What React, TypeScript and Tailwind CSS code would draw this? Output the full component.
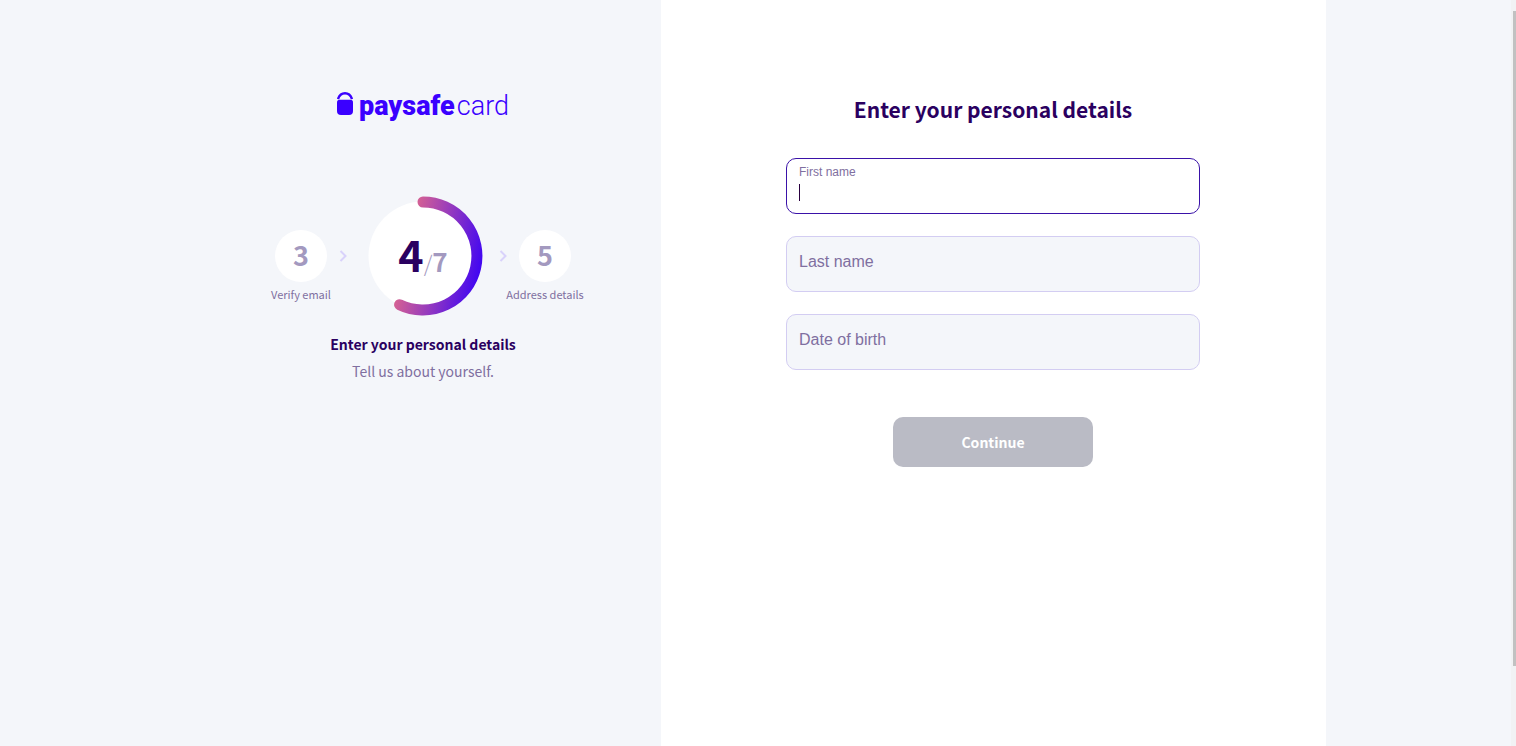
import React, {useState} from "react";

interface Field {
    id: string;
    label: string;
}

interface StepProps {
    number: number;
    label: string;
}

const FIELDS: Field[] = [
    {id: 'first-name', label: 'First name'},
    {id: 'last-name', label: 'Last name'},
    {id: 'birth-date', label: 'Date of birth'},
];

export default function App() {
    const [active, setActive] = useState('first-name');
    const [values, setValues] = useState<Record<string, string>>({});

    const complete = FIELDS.every(f => values[f.id]);

    return (
        <div className="flex min-h-screen bg-[#f4f6fa] font-['Noto_Sans_CJK_SC','Source_Sans_Pro',sans-serif]">
            <div className="flex-1">
                <div className="mx-auto flex min-h-screen max-w-[1140px]">
                    <aside className="flex w-5/12 flex-col items-center pt-[91px]">
                        <Logo/>

                        <div className="mt-[74px] flex items-start">
                            <Step number={3} label="Verify email"/>
                            <Chevron className="ml-3 mr-4"/>
                            <ProgressRing/>
                            <Chevron className="ml-4 mr-3"/>
                            <Step number={5} label="Address details"/>
                        </div>

                        <p className="mt-4 text-[14px] leading-6 font-bold text-[#2a0060]">Enter your personal details</p>
                        <p className="mt-[3px] text-[14px] leading-6 text-[#7f6fa0]">Tell us about yourself.</p>
                    </aside>

                    <main className="flex w-7/12 flex-col items-center bg-white pt-[91px]">
                        <h1 className="text-[21px] leading-9 font-bold text-[#2a0060]">Enter your personal details</h1>

                        <form
                            onSubmit={e => e.preventDefault()}
                            className="mt-[31px] flex w-full max-w-[414px] flex-col items-center"
                        >
                            <div className="flex w-full flex-col gap-[22px]">
                                {FIELDS.map(field => (
                                    <TextField
                                        key={field.id}
                                        field={field}
                                        active={active === field.id}
                                        value={values[field.id] || ''}
                                        onFocus={() => setActive(field.id)}
                                        onChange={v => setValues({...values, [field.id]: v})}
                                    />
                                ))}
                            </div>

                            <button
                                type="submit"
                                disabled={!complete}
                                className="mt-[47px] h-[50px] w-[200px] rounded-[10px] bg-[#3a00ff] text-[14px] font-bold text-white disabled:bg-[#babbc5]"
                            >
                                Continue
                            </button>
                        </form>
                    </main>
                </div>
            </div>

            {/* Scroll track */}
            <div className="flex w-[5px] flex-col items-end bg-[#f1f2f4] pt-[11px]">
                <div className="h-[655px] w-[3px] bg-[#c1c1c1]"/>
            </div>
        </div>
    );
}

const TextField: React.FC<{
    field: Field,
    active: boolean,
    value: string,
    onFocus: () => void,
    onChange: (value: string) => void
}> = ({field, active, value, onFocus, onChange}) => {
    const floating = active || value !== '';

    return (
        <div className="relative font-['Liberation_Sans',Arial,sans-serif]">
            <input
                id={field.id}
                type="text"
                value={value}
                onFocus={onFocus}
                onChange={e => onChange(e.target.value)}
                className={`block h-14 w-full rounded-[10px] border px-3 pt-3 text-base text-[#2a0060] outline-none ${
                    active ? 'border-[#3a12a8] bg-white' : 'border-[#d3cdf2] bg-[#f4f6fa]'
                } ${active && !value ? 'caret-transparent' : ''}`}
            />
            <label
                htmlFor={field.id}
                className={`pointer-events-none absolute left-[13px] text-[#7f6fa0] ${
                    floating ? 'top-1.5 text-xs leading-4' : 'top-3.5 text-base leading-6'
                }`}
            >
                {field.label}
            </label>
            {active && !value && (
                <span className="pointer-events-none absolute top-[26px] left-[13px] h-[17px] w-px bg-[#2a0040]"/>
            )}
        </div>
    );
};

const Step: React.FC<StepProps> = ({number, label}) => (
    <div className="flex w-[52px] flex-col items-center pt-[34px]">
        <div className="h-[52px] w-[52px] rounded-full bg-white text-center text-[27px] leading-[50px] font-bold text-[#a399bf]">
            {number}
        </div>
        <span className="mt-1 text-[11px] leading-4 whitespace-nowrap text-[#7f6fa0]">{label}</span>
    </div>
);

const Chevron: React.FC<{ className: string }> = ({className}) => (
    <svg viewBox="0 0 8 12" className={`mt-[54px] h-3 w-2 ${className}`} fill="none" stroke="#d9d2fb" strokeWidth="2">
        <path d="M1.5 1 L6.5 6 L1.5 11"/>
    </svg>
);

const ProgressRing = () => (
    <div className="relative h-[120px] w-[120px]">
        <svg viewBox="0 0 120 120" className="h-full w-full" fill="none">
            <defs>
                <linearGradient id="ring" gradientUnits="userSpaceOnUse" x1="40" y1="56" x2="116" y2="73">
                    <stop offset="0" stopColor="#da6490"/>
                    <stop offset="0.5" stopColor="#9238c0"/>
                    <stop offset="1" stopColor="#4408f0"/>
                </linearGradient>
            </defs>
            <circle cx="60" cy="60" r="54.5" fill="#fff"/>
            <path d="M60 6 A54 54 0 1 1 36.6 108.7" stroke="url(#ring)" strokeWidth="11" strokeLinecap="round"/>
        </svg>
        <div className="absolute inset-0 flex items-baseline justify-center pt-[27px] leading-[60px]">
            <span className="text-[43px] font-bold text-[#2a0060]">4</span>
            <span className="text-[22px] font-light text-[#a399bf]">/</span>
            <span className="text-[26px] font-bold text-[#a399bf]">7</span>
        </div>
    </div>
);

const Logo = () => (
    <div className="flex h-[31px] items-start text-[#3a00ff]">
        <svg viewBox="0 0 16 24" className="mr-1.5 h-6 w-4" fill="none">
            <path d="M1 8 C2.2 4.4 4.6 2.3 8 2.3 C11.4 2.3 13.8 4.4 15 8" stroke="currentColor" strokeWidth="2.4"/>
            <path d="M2.5 8.8 H13.5 Q16 8.8 16 11.5 V20 Q16 24 12 24 H4 Q0 24 0 20 V11.5 Q0 8.8 2.5 8.8 Z" fill="currentColor"/>
        </svg>
        <span className="flex gap-0.5 font-['Roboto',sans-serif] text-[27px] leading-[30px]">
            <span className="font-black">paysafe</span>
            <span className="font-light">card</span>
        </span>
    </div>
);
